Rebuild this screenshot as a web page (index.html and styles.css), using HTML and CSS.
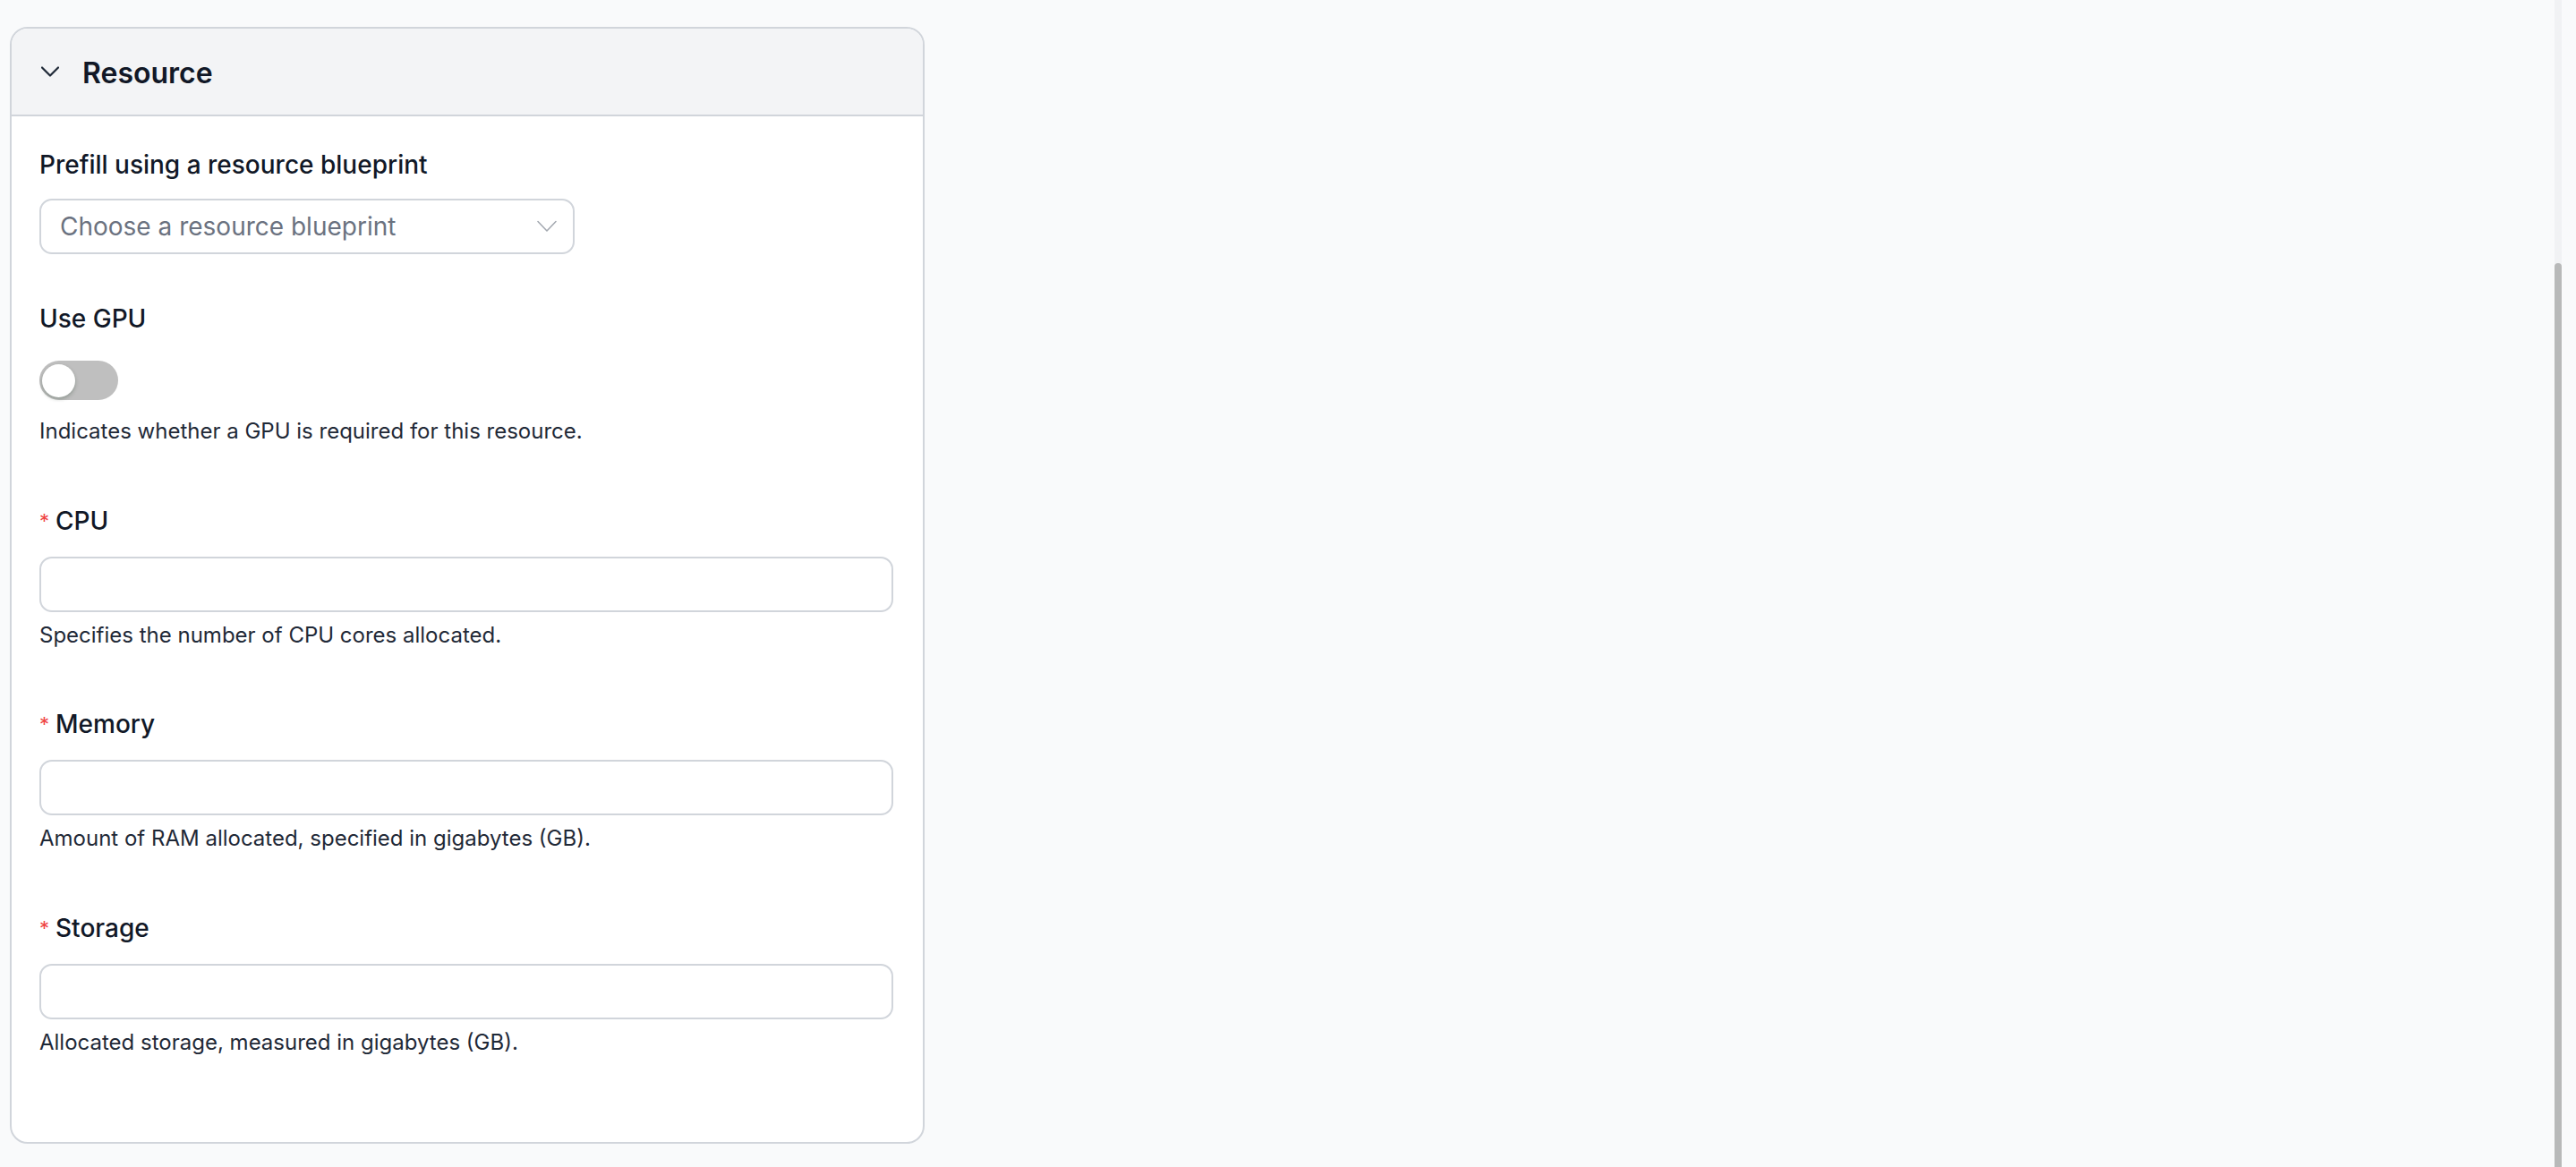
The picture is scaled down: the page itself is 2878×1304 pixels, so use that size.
FILE: index.html
```html
<!DOCTYPE html>
<html lang="en">

<head>
    <meta charset="UTF-8">
    <meta name="viewport" content="width=device-width, initial-scale=1.0">
    <title>Resource</title>

    <link rel="stylesheet" href="styles.css">
</head>

<body>
    <main class="page">
        <section class="panel">
            <header class="panel-head">
                <svg class="caret" width="20" height="20" viewBox="0 0 20 20" fill="none">
                    <path d="M1 5.5 L10 14.5 L19 5.5" stroke="#1f2937" stroke-width="2.2" stroke-linecap="round" stroke-linejoin="round" />
                </svg>
                <h2>Resource</h2>
            </header>

            <div class="panel-body">
                <div class="field field-select">
                    <label>Prefill using a resource blueprint</label>
                    <div class="select">
                        <span class="placeholder">Choose a resource blueprint</span>
                        <svg width="22" height="14" viewBox="0 0 22 14" fill="none">
                            <path d="M1 1.5 L11 12 L21 1.5" stroke="#a3a8b0" stroke-width="1.5" stroke-linecap="round" stroke-linejoin="round" />
                        </svg>
                    </div>
                </div>

                <div class="field field-switch">
                    <label>Use GPU</label>
                    <button class="switch" type="button" aria-checked="false"><span class="knob"></span></button>
                    <p class="help">Indicates whether a GPU is required for this resource.</p>
                </div>

                <div class="field">
                    <label><span class="req">*</span>CPU</label>
                    <input type="text" class="input">
                    <p class="help">Specifies the number of CPU cores allocated.</p>
                </div>

                <div class="field">
                    <label><span class="req">*</span>Memory</label>
                    <input type="text" class="input">
                    <p class="help">Amount of RAM allocated, specified in gigabytes (GB).</p>
                </div>

                <div class="field">
                    <label><span class="req">*</span>Storage</label>
                    <input type="text" class="input">
                    <p class="help">Allocated storage, measured in gigabytes (GB).</p>
                </div>
            </div>
        </section>
    </main>

    <div class="scrollbar"><div class="thumb"></div></div>
</body>

</html>
```

FILE: styles.css
```css
* {
    box-sizing: border-box;
}

html,
body {
    height: 100%;
}

body {
    margin: 0;
    overflow: hidden;
    background: #f9fafb;
    font-family: Inter, "Noto Sans", sans-serif;
    color: #111827;
}

.page {
    padding: 30px 0 0 11px;
}

.panel {
    width: 1022px;
    background: #fff;
    border: 2px solid #d1d5db;
    border-radius: 20px;
    overflow: hidden;
}

.panel-head {
    display: flex;
    align-items: center;
    height: 98px;
    padding-left: 33px;
    background: #f3f4f6;
    border-bottom: 2px solid #d1d5db;
}

.caret {
    flex: none;
}

.panel-head h2 {
    margin: 3px 0 0 26px;
    font-size: 32px;
    font-weight: 600;
    line-height: 1;
    color: #111827;
}

.panel-body {
    padding: 35px 33px 94px 31px;
}

.field {
    margin-bottom: 63.5px;
}

.field:last-child {
    margin-bottom: 0;
}

.field label {
    display: flex;
    align-items: baseline;
    margin-bottom: 19px;
    font-size: 28px;
    font-weight: 500;
    line-height: 38px;
    color: #111827;
}

.req {
    position: relative;
    top: -2px;
    margin-right: 7px;
    font-size: 22px;
    font-weight: 400;
    color: #ef4444;
}

.field-select {
    margin-bottom: 53px;
}

.select {
    display: flex;
    align-items: center;
    justify-content: space-between;
    width: 598px;
    height: 62px;
    padding: 0 18px 0 21px;
    background: #fff;
    border: 2px solid #d1d5db;
    border-radius: 14px;
}

.placeholder {
    font-size: 28px;
    color: #6b7280;
}

.field-switch label {
    margin-bottom: 28px;
}

.switch {
    display: block;
    position: relative;
    width: 88px;
    height: 44px;
    padding: 0;
    border: none;
    border-radius: 22px;
    background: #bfbfbf;
    cursor: pointer;
}

.knob {
    position: absolute;
    top: 4px;
    left: 3px;
    width: 37px;
    height: 37px;
    border-radius: 50%;
    background: #fff;
    box-shadow: 0 2px 4px rgba(0, 35, 11, 0.25);
}

.field-switch .help {
    margin-top: 18px;
}

.input {
    display: block;
    width: 100%;
    height: 62px;
    padding: 0 20px;
    font: inherit;
    font-size: 28px;
    background: #fff;
    border: 2px solid #d1d5db;
    border-radius: 14px;
    outline: none;
}

.help {
    margin: 9px 0 0;
    font-size: 24px;
    line-height: 34px;
    color: #1f2937;
}

.scrollbar {
    position: fixed;
    top: 0;
    right: 16px;
    width: 8px;
    height: 100%;
    background: #f1f2f4;
}

.thumb {
    margin-top: 294px;
    height: calc(100% - 294px);
    border-radius: 4px 4px 0 0;
    background: #b8b9b9;
}
```
